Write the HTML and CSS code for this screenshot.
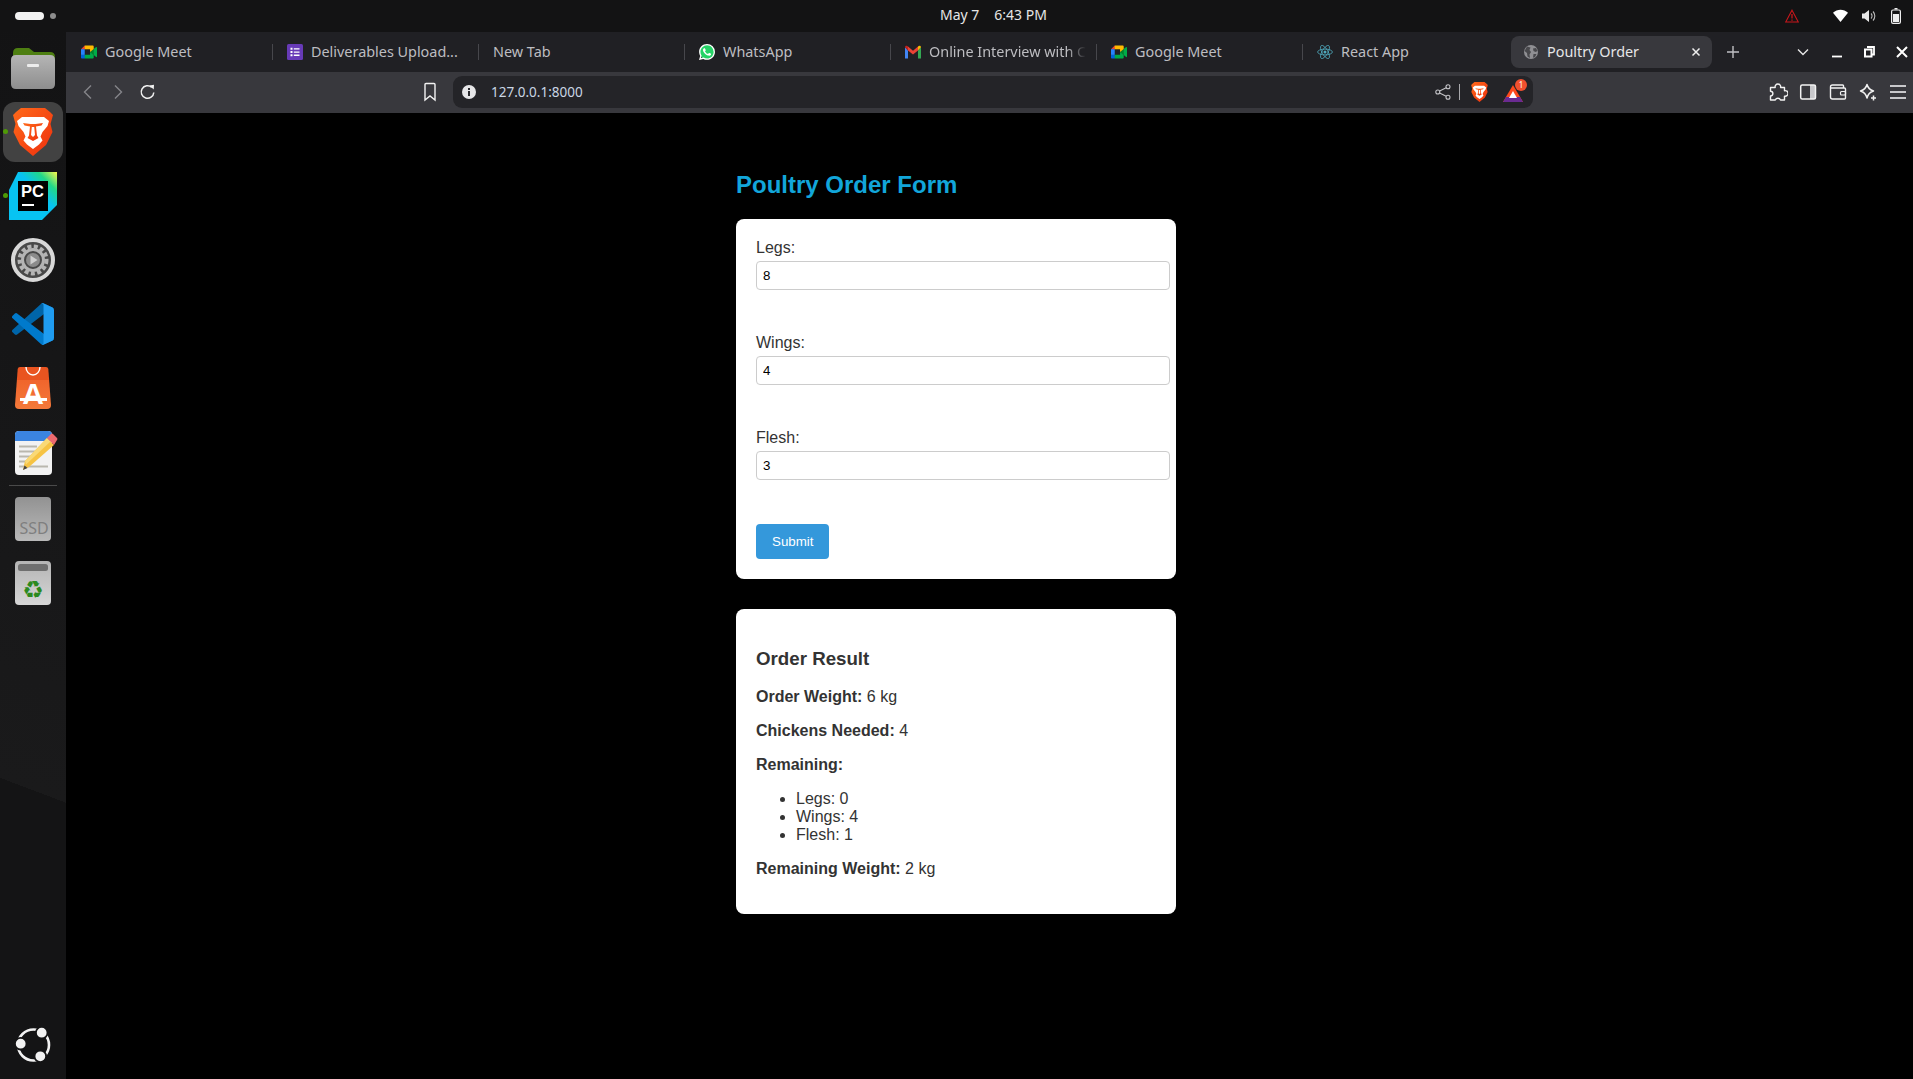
FILE: index.html
```html
<!DOCTYPE html>
<html lang="en">
<head>
<meta charset="utf-8">
<title>Poultry Order</title>
<link rel="stylesheet" href="styles.css">
</head>
<body>
<svg class="defs" aria-hidden="true">
  <defs>
    <linearGradient id="braveGrad" x1="0" y1="0" x2="1" y2="1"><stop offset="0" stop-color="#ff6a1a"/><stop offset="1" stop-color="#ee2f0e"/></linearGradient>
    <linearGradient id="pcGrad" x1="0" y1="1" x2="1" y2="0"><stop offset="0" stop-color="#07c3f2"/><stop offset=".6" stop-color="#07c3f2"/><stop offset=".8" stop-color="#21d789"/><stop offset="1" stop-color="#fcf84a"/></linearGradient>
    <linearGradient id="folderGrad" x1="0" y1="0" x2="0" y2="1"><stop offset="0" stop-color="#b5b5b5"/><stop offset="1" stop-color="#8e8e8e"/></linearGradient>
    <linearGradient id="bagGrad" x1="0" y1="0" x2="0" y2="1"><stop offset="0" stop-color="#e95420"/><stop offset=".31" stop-color="#e95420"/><stop offset=".31" stop-color="#f0652c"/><stop offset="1" stop-color="#f4793a"/></linearGradient>
    <linearGradient id="ssdGrad" x1="0" y1="0" x2="0" y2="1"><stop offset="0" stop-color="#929292"/><stop offset="1" stop-color="#b9b9b9"/></linearGradient>
    <linearGradient id="trashGrad" x1="0" y1="0" x2="0" y2="1"><stop offset="0" stop-color="#b4b4b4"/><stop offset="1" stop-color="#d6d6d6"/></linearGradient>
    <symbol id="meet" viewBox="0 0 87.5 72">
      <path fill="#00832d" d="M49.5 36l8.53 9.75 11.47 7.33 2-17.02-2-16.64-11.69 6.44z"/>
      <path fill="#0066da" d="M0 51.5V66c0 3.315 2.685 6 6 6h14.5l3-10.96-3-9.54-9.95-3z"/>
      <path fill="#e94235" d="M20.5 0L0 20.5l10.55 3 9.95-3 2.95-9.41z"/>
      <path fill="#2684fc" d="M20.5 20.5H0v31h20.5z"/>
      <path fill="#00ac47" d="M82.6 8.68L69.5 19.42v33.66l13.16 10.79c1.97 1.54 4.85.135 4.85-2.37V11c0-2.535-2.945-3.925-4.91-2.32zM49.5 36v15.5h-29V72h43c3.315 0 6-2.685 6-6V53.08z"/>
      <path fill="#ffba00" d="M63.5 0h-43v20.5h29V36l20-16.57V6c0-3.315-2.685-6-6-6z"/>
    </symbol>
    <symbol id="brave" viewBox="0 0 40 48">
      <path fill="url(#braveGrad)" d="M8 0H32L37 4 40 7 37.500 16 39.500 24 33 37 20 48 7 37 .5 24 2.500 16 0 7 3 4z"/>
      <polygon fill="#fff" points="9,9 31,9 36,13 34.500,18 29.500,24 27.500,28.500 29.500,32.500 26,36.500 20,41 14,36.500 10.500,32.500 12.500,28.500 10.500,24 5.500,18 4,13"/>
      <polygon fill="url(#braveGrad)" points="10,15 17.500,16 22.500,16 30,15 28.500,17.500 23,18.500 24,27.500 25.500,30 20,33 14.500,30 16,27.500 17,18.500 11.500,17.500"/>
      <polygon fill="#fff" points="18.800,19 21.200,19 22,27 20,29 18,27"/>
    </symbol>
  </defs>
</svg>

<header class="topbar">
  <div class="workspaces">
    <span class="workspace-pill"></span>
    <span class="workspace-dot"></span>
  </div>
  <time class="clock"><span>May 7</span><span>6:43 PM</span></time>
  <div class="tray">
    <svg class="tray-warning" viewBox="0 0 14 14"><path d="M7 1.200L13.300 13H.7z" fill="none" stroke="#c9171b" stroke-width="1.100"/><path d="M7 5v4.500M7 10.500v1.200" stroke="#c9171b" stroke-width="1.300"/></svg>
    <svg class="tray-wifi" viewBox="0 0 16 14"><path d="M0 3.500C4.500-.9 11.500-.9 16 3.500L8 13.500z" fill="#fff"/></svg>
    <svg class="tray-volume" viewBox="0 0 14 14"><path d="M0 4.500h2.500L7 1v12L2.500 9.500H0z" fill="#e8e8e8"/><path d="M9 4.500a3.500 3.500 0 0 1 0 5M11 2.500a6.500 6.500 0 0 1 0 9" fill="none" stroke="#bdbdbd" stroke-width="1.100"/></svg>
    <svg class="tray-battery" viewBox="0 0 10 16"><path d="M3.500 0h3v1.500h-3z" fill="#eee"/><rect x=".6" y="2" width="8.800" height="13.400" rx="1.400" fill="none" stroke="#eee" stroke-width="1.200"/><rect x="2" y="6" width="6" height="8" fill="#eee"/></svg>
  </div>
</header>

<div class="desktop">
  <nav class="dock">
    <div class="dock-slot">
      <svg class="ic-files" viewBox="0 0 44 41"><path d="M2 5q0-5 5-5h11l5 4h16q5 0 5 5v10H2z" fill="#4e7f12"/><path d="M0 12q0-5 5-5h34q5 0 5 5v24q0 5-5 5H5q-5 0-5-5z" fill="url(#folderGrad)"/><rect x="16" y="16" width="12" height="3" rx="1" fill="#ececec"/></svg>
    </div>
    <div class="dock-slot dock-slot-running">
      <div class="dock-tile">
        <svg class="ic-brave"><use href="#brave"/></svg>
      </div>
    </div>
    <div class="dock-slot dock-slot-running">
      <svg class="ic-pycharm" viewBox="0 0 48 48"><path d="M9 0h39v33L33 48H0V18z" fill="url(#pcGrad)"/><rect x="9" y="9" width="30" height="30"/><text x="12" y="25" class="pc-text">PC</text><rect x="13" y="32" width="12" height="2" fill="#fff"/></svg>
    </div>
    <div class="dock-slot">
      <svg class="ic-settings" viewBox="0 0 44 44"><circle cx="22" cy="22" r="20" fill="#484848" stroke="#d8d8d8" stroke-width="4"/><circle cx="22" cy="22" r="13.500" fill="none" stroke="#b4b4b4" stroke-width="4" stroke-dasharray="4 2.400"/><circle cx="22" cy="22" r="10.500" fill="none" stroke="#b4b4b4" stroke-width="3"/><circle cx="22" cy="22" r="7" fill="#8b8b8b"/><path d="M19.500 17.500l7 4.500-7 4.500z" fill="#cfcfcf"/></svg>
    </div>
    <div class="dock-slot">
      <svg class="ic-vscode" viewBox="0 0 100 100"><path fill="#0065a9" d="M96.500 10.800L75.900.9a6.200 6.200 0 0 0-7.100 1.200L1.400 63.600a4.200 4.200 0 0 0 0 6.200l5.500 5a4.200 4.200 0 0 0 5.300.2L93.400 13.300c2.700-2.100 6.600-.2 6.600 3.200v-.2a6.300 6.300 0 0 0-3.500-5.500z"/><path fill="#007acc" d="M96.500 89.200L75.900 99.100a6.200 6.200 0 0 1-7.100-1.200L1.400 36.400a4.200 4.200 0 0 1 0-6.200l5.500-5a4.200 4.200 0 0 1 5.300-.2l81.200 61.700c2.700 2.100 6.600.2 6.600-3.200v.2a6.300 6.300 0 0 1-3.500 5.500z"/><path fill="#1f9cf0" d="M75.900 99.100a6.200 6.200 0 0 1-7.100-1.200c2.300 2.300 6.200.7 6.200-2.600V4.700c0-3.300-3.900-4.900-6.200-2.600a6.200 6.200 0 0 1 7.100-1.200l20.600 9.900A6.300 6.300 0 0 1 100 16.400v67.200a6.300 6.300 0 0 1-3.500 5.600z"/></svg>
    </div>
    <div class="dock-slot">
      <svg class="ic-bag" viewBox="0 0 36 42"><path d="M5 0h26q2 0 2.300 2L36 38q0 4-4 4H4q-4 0-4-4L2.700 2Q3 0 5 0z" fill="url(#bagGrad)"/><path d="M11 0a7 8 0 0 0 14 0" fill="none" stroke="#fff" stroke-width="1.400"/><text x="18" y="37" class="bag-text">A</text><path d="M5 31h27v3H5z" fill="#fff"/></svg>
    </div>
    <div class="dock-slot">
      <svg class="ic-editor" viewBox="0 0 43 45"><rect y="1" width="37" height="44" rx="4" fill="#f2f2f2"/><path d="M0 5q0-4 4-4h29q4 0 4 4v6H0z" fill="#3b84e0"/><path d="M4 15.500h18v2H4zM4 20.500h16v2H4zM4 25.500h13v2H4zM4 30.500h9v2H4zM4 35.500h29v2H4z" fill="#b9b7ae"/><path d="M32 8l7 7-25 22-6 3 2-9z" fill="#f6c343"/><path d="M32 8l3.500 3.500L11 34.500 10 31z" fill="#f9d976"/><path d="M32 8l4-4q1-1 2 0l4 4q1 1 0 2l-3 5z" fill="#ec6a6f"/><path d="M9.500 35.500L8 40l4.500-2z" fill="#444"/></svg>
    </div>
    <div class="dock-sep"></div>
    <div class="dock-slot">
      <svg class="ic-ssd" viewBox="0 0 36 44"><rect width="36" height="44" rx="4" fill="url(#ssdGrad)"/><text x="4.500" y="37" class="ssd-text">SSD</text></svg>
    </div>
    <div class="dock-slot">
      <svg class="ic-trash" viewBox="0 0 36 44"><rect width="36" height="44" rx="4" fill="url(#trashGrad)"/><rect x="3" y="3" width="30" height="7" rx="2.500" fill="#6f6f6f"/><text x="18" y="37" class="trash-text">♻</text></svg>
    </div>
    <div class="dock-apps">
      <svg class="ic-ubuntu" viewBox="0 0 36 36"><circle cx="18.500" cy="18" r="15.500" fill="none" stroke="#f2f2f2" stroke-width="2.600"/><g fill="#f2f2f2" stroke="#141415" stroke-width="1.800"><circle cx="26.700" cy="5.700" r="5.800"/><circle cx="5.700" cy="16.700" r="5.800"/><circle cx="25.300" cy="29.300" r="5.800"/></g></svg>
    </div>
  </nav>

  <div class="browser">
    <div class="tabstrip">
      <div class="tab">
        <svg class="favicon"><use href="#meet"/></svg>
        <span class="tab-title">Google Meet</span>
      </div>
      <div class="tab">
        <svg class="favicon" viewBox="0 0 16 16"><rect width="16" height="16" rx="1.500" fill="#673ab7"/><path d="M3.500 3.800h2v2h-2zM3.500 7h2v2h-2zM3.500 10.200h2v2h-2zM6.800 4.200h5.700v1.300H6.800zM6.800 7.400h5.700v1.300H6.800zM6.800 10.600h5.700v1.300H6.800z" fill="#fff"/></svg>
        <span class="tab-title">Deliverables Upload...</span>
      </div>
      <div class="tab">
        <span class="tab-title">New Tab</span>
      </div>
      <div class="tab">
        <svg class="favicon" viewBox="0 0 24 24"><circle cx="12" cy="12" r="11" fill="#25d366"/><path fill="#fff" d="M17.472 14.382c-.297-.149-1.758-.867-2.030-.967-.273-.099-.471-.148-.67.15-.197.297-.767.966-.94 1.164-.173.199-.347.223-.644.075-.297-.15-1.255-.463-2.390-1.475-.883-.788-1.480-1.761-1.653-2.059-.173-.297-.018-.458.13-.606.134-.133.298-.347.446-.52.149-.174.198-.298.298-.497.099-.198.05-.371-.025-.52-.075-.149-.669-1.612-.916-2.207-.242-.579-.487-.5-.669-.51-.173-.008-.371-.01-.57-.01-.198 0-.52.074-.792.372-.272.297-1.040 1.016-1.040 2.479 0 1.462 1.065 2.875 1.213 3.074.149.198 2.096 3.200 5.077 4.487.709.306 1.262.489 1.694.625.712.227 1.360.195 1.871.118.571-.085 1.758-.719 2.006-1.413.248-.694.248-1.289.173-1.413-.074-.124-.272-.198-.57-.347m-5.421 7.403h-.004a9.870 9.870 0 01-5.031-1.378l-.361-.214-3.741.982.998-3.648-.235-.374a9.860 9.860 0 01-1.510-5.260c.001-5.450 4.436-9.884 9.888-9.884 2.640 0 5.122 1.030 6.988 2.898a9.825 9.825 0 012.893 6.994c-.003 5.450-4.437 9.884-9.885 9.884m8.413-18.297A11.815 11.815 0 0012.050 0C5.495 0 .16 5.335.157 11.892c0 2.096.547 4.142 1.588 5.945L.057 24l6.305-1.654a11.882 11.882 0 005.683 1.448h.005c6.554 0 11.890-5.335 11.893-11.893a11.821 11.821 0 00-3.480-8.413z"/></svg>
        <span class="tab-title">WhatsApp</span>
      </div>
      <div class="tab">
        <svg class="favicon" viewBox="0 0 16 13"><path d="M0 1.800V13h3V5z" fill="#4285f4"/><path d="M13 5v8h3V1.800z" fill="#34a853"/><path d="M3 1L8 5.200 13 1v4L8 9 3 5z" fill="#ea4335"/><path d="M0 1.800C0 .3 1.700-.4 3 1v4z" fill="#c5221f"/><path d="M16 1.800C16 .3 14.300-.4 13 1v4z" fill="#fbbc04"/></svg>
        <span class="tab-title tab-title-fade">Online Interview with C</span>
      </div>
      <div class="tab">
        <svg class="favicon"><use href="#meet"/></svg>
        <span class="tab-title">Google Meet</span>
      </div>
      <div class="tab">
        <svg class="favicon" viewBox="0 0 16 16"><g fill="none" stroke="#4fa9bd" stroke-width=".8"><ellipse cx="8" cy="8" rx="7.400" ry="2.900"/><ellipse cx="8" cy="8" rx="7.400" ry="2.900" transform="rotate(60 8 8)"/><ellipse cx="8" cy="8" rx="7.400" ry="2.900" transform="rotate(120 8 8)"/></g><circle cx="8" cy="8" r="1.500" fill="#4fa9bd"/></svg>
        <span class="tab-title">React App</span>
      </div>
      <div class="tab tab-active">
        <svg class="favicon favicon-globe" viewBox="0 0 14 14"><circle cx="7" cy="7" r="7" fill="#8f8f93"/><path d="M3 1.500l3.500 1-1 2.500L7 7 5.500 9.500 6 13 3.500 11.500 3 8 .5 6zM9 3.500l3-.5 1.500 3-2 1-2-1zM9.500 9h3L11 12l-2 .8z" fill="#48484c"/></svg>
        <span class="tab-title">Poultry Order</span>
        <svg class="tab-close" viewBox="0 0 10 10"><path d="M1.500 1.500l7 7M8.500 1.500l-7 7" stroke="#eee" stroke-width="1.500"/></svg>
      </div>
      <div class="tab-new"><svg class="ic-14" viewBox="0 0 14 14"><path d="M7 1v12M1 7h12" stroke="#bfbfc3" stroke-width="1.400"/></svg></div>
      <div class="window-controls">
        <svg class="win-icon win-chevron" viewBox="0 0 16 16"><path d="M3 5.500l5 5 5-5" fill="none" stroke="#e6e6e6" stroke-width="1.400"/></svg>
        <svg class="win-icon win-min" viewBox="0 0 16 16"><path d="M3 12.500h10" stroke="#fff" stroke-width="1.800"/></svg>
        <svg class="win-icon win-restore" viewBox="0 0 16 16"><path d="M6 3h7v7.500h-2" fill="none" stroke="#fff" stroke-width="1.800"/><rect x="4" y="5.500" width="6.500" height="7" fill="none" stroke="#fff" stroke-width="2"/></svg>
        <svg class="win-icon win-close" viewBox="0 0 16 16"><path d="M3 3l10 10M13 3L3 13" stroke="#fff" stroke-width="2"/></svg>
      </div>
    </div>

    <div class="toolbar">
      <svg class="tool-icon" viewBox="0 0 20 20"><path d="M13 3.500L6.500 10l6.500 6.500" fill="none" stroke="#85858a" stroke-width="1.400"/></svg>
      <svg class="tool-icon tool-next" viewBox="0 0 20 20"><path d="M7 3.500l6.500 6.500L7 16.500" fill="none" stroke="#85858a" stroke-width="1.400"/></svg>
      <svg class="tool-icon tool-next" viewBox="0 0 20 20"><path d="M15.800 10.500a6.300 6.300 0 1 1-2-5.100" fill="none" stroke="#f2f2f2" stroke-width="1.500"/><path d="M11.500 3.500l4.500-.8-.3 4.800z" fill="#f2f2f2"/></svg>
      <svg class="tool-icon tool-bookmark" viewBox="0 0 20 20"><path d="M5 2.500q0-1 1-1h8q1 0 1 1v15.500l-5-4-5 4z" fill="none" stroke="#f2f2f2" stroke-width="1.400"/></svg>
      <div class="urlbar">
        <svg class="url-info" viewBox="0 0 14 14"><circle cx="7" cy="7" r="7" fill="#e6e6e8"/><path d="M6 6h2v5H6zM6 3h2v2H6z" fill="#2a2a2e"/></svg>
        <span class="url-text">127.0.0.1:8000</span>
        <svg class="url-share" viewBox="0 0 16 16"><g fill="none" stroke="#c4c4c8" stroke-width="1.100"><circle cx="2.800" cy="8" r="2"/><circle cx="13" cy="2.800" r="2"/><circle cx="13" cy="13.200" r="2"/><path d="M4.600 7l6.600-3.300M4.600 9l6.600 3.300"/></g></svg>
        <span class="url-divider"></span>
        <svg class="url-brave"><use href="#brave"/></svg>
        <span class="url-bat">
          <svg class="bat-icon" viewBox="0 0 20 17"><path d="M10 0l10 17H0z" fill="#ff4a1c"/><path d="M0 17l3-5h14l3 5z" fill="#6a2b92"/><path d="M10 6l4 7H6z" fill="#fff"/></svg>
          <span class="bat-badge">1</span>
        </span>
      </div>
      <svg class="tool-icon tool-puzzle" viewBox="0 0 20 20"><path d="M2.500 5.500h4.700a2.800 2.800 0 1 1 5.400 0h3.900v3.200a2.800 2.800 0 1 1 0 5.400v3.900h-4a2.800 2.800 0 0 0-5.200 0H2.500v-4a2.400 2.400 0 0 0 0-4.800z" fill="none" stroke="#f2f2f2" stroke-width="1.400" stroke-linejoin="round"/></svg>
      <svg class="tool-icon tool-next" viewBox="0 0 20 20"><rect x="12" y="3" width="5.500" height="14" fill="#c8c8cb"/><rect x="2.700" y="3" width="14.800" height="14" rx="1.500" fill="none" stroke="#f2f2f2" stroke-width="1.500"/></svg>
      <svg class="tool-icon tool-next" viewBox="0 0 20 20"><path d="M15.500 6V3.800q0-.8-.8-.8H4.500q-2 0-2 2v10q0 2 2 2h12q1 0 1-1V7q0-1-1-1H3" fill="none" stroke="#f2f2f2" stroke-width="1.400"/><rect x="12.500" y="9.500" width="5" height="3.500" rx="1" fill="none" stroke="#f2f2f2" stroke-width="1.200"/></svg>
      <svg class="tool-icon tool-next" viewBox="0 0 20 20"><path d="M9 2.500q1.300 5 6.500 6.500-5.200 1.500-6.500 7-1.300-5.500-6.500-7Q7.700 7.500 9 2.500z" fill="none" stroke="#f2f2f2" stroke-width="1.500" stroke-linejoin="round"/><path d="M15.500 13.500v5M13 16h5" stroke="#f2f2f2" stroke-width="1.500"/></svg>
      <svg class="tool-icon tool-next" viewBox="0 0 20 20"><path d="M2 4h16M2 10h16M2 16h16" stroke="#c8c8cb" stroke-width="2"/></svg>
    </div>

    <main class="page">
      <div class="container">
        <h2 class="page-title">Poultry Order Form</h2>
        <form class="card order-form">
          <div class="field">
            <label class="field-label" for="legs">Legs:</label>
            <input class="field-input" id="legs" type="text" value="8">
          </div>
          <div class="field">
            <label class="field-label" for="wings">Wings:</label>
            <input class="field-input" id="wings" type="text" value="4">
          </div>
          <div class="field">
            <label class="field-label" for="flesh">Flesh:</label>
            <input class="field-input" id="flesh" type="text" value="3">
          </div>
          <button class="submit" type="button">Submit</button>
        </form>
        <section class="card result">
          <h3 class="result-title">Order Result</h3>
          <p><strong>Order Weight:</strong> 6 kg</p>
          <p><strong>Chickens Needed:</strong> 4</p>
          <p><strong>Remaining:</strong></p>
          <ul>
            <li>Legs: 0</li>
            <li>Wings: 4</li>
            <li>Flesh: 1</li>
          </ul>
          <p><strong>Remaining Weight:</strong> 2 kg</p>
        </section>
      </div>
    </main>
  </div>
</div>
</body>
</html>
```
FILE: styles.css
```css
* { box-sizing: border-box; }

html, body {
  margin: 0;
  height: 100%;
}

body {
  display: flex;
  flex-direction: column;
  width: 1913px;
  height: 1079px;
  overflow: hidden;
  background: #000;
  font-family: "Liberation Sans", Arial, sans-serif;
  color: #333;
}

.defs { display: block; width: 0; height: 0; }

/* top bar */
.topbar {
  display: flex;
  align-items: center;
  flex: 0 0 32px;
  background: #131314;
  font-family: "Noto Sans", sans-serif;
  font-size: 14px;
  color: #e6e6e6;
}

.workspaces {
  display: flex;
  align-items: center;
  gap: 6px;
  width: 940px;
  padding-left: 15px;
}

.workspace-pill {
  width: 29px;
  height: 8px;
  border-radius: 4px;
  background: #f2f2f2;
}

.workspace-dot {
  width: 6px;
  height: 6px;
  border-radius: 50%;
  background: #8d8d8d;
}

.clock {
  display: flex;
  gap: 15px;
  padding-bottom: 4px;
}

.tray {
  display: flex;
  align-items: center;
  margin-left: auto;
  padding-right: 12px;
}

.tray-warning { width: 14px; height: 14px; }
.tray-wifi { width: 15px; height: 14px; margin-left: 34px; }
.tray-volume { width: 14px; height: 14px; margin-left: 14px; }
.tray-battery { width: 10px; height: 16px; margin-left: 15px; }

.desktop {
  display: flex;
  flex: 1;
  min-height: 0;
}

/* dock */
.dock {
  display: flex;
  flex-direction: column;
  flex: 0 0 66px;
  padding: 4px 0 16px;
  background: linear-gradient(200.7deg, #131314 0, #1a1a1b 71.9%, #141415 71.9%);
}

.dock-slot {
  position: relative;
  display: flex;
  align-items: center;
  justify-content: center;
  flex: 0 0 64px;
}

.dock-slot-running::before {
  content: "";
  position: absolute;
  left: 3px;
  top: 29px;
  width: 5px;
  height: 5px;
  border-radius: 50%;
  background: #4e9a06;
}

.dock-tile {
  display: flex;
  align-items: center;
  justify-content: center;
  width: 60px;
  height: 60px;
  border-radius: 12px;
  background: #424242;
}

.dock-sep {
  flex: 0 0 1px;
  margin: 1px 9px 1px;
  background: #4a4a4a;
}

.dock-apps {
  display: flex;
  justify-content: center;
  margin-top: auto;
}

.ic-files { width: 44px; height: 41px; }
.ic-brave { width: 40px; height: 48px; }
.ic-pycharm { width: 48px; height: 48px; }
.ic-settings { width: 44px; height: 44px; }
.ic-vscode { width: 42px; height: 42px; }
.ic-bag { width: 36px; height: 42px; }
.ic-editor { width: 43px; height: 45px; margin-left: 7px; }
.ic-ssd { width: 36px; height: 44px; }
.ic-trash { width: 36px; height: 44px; }
.ic-ubuntu { width: 36px; height: 36px; }

.pc-text {
  font-family: "Liberation Sans", sans-serif;
  font-weight: 700;
  font-size: 16.5px;
  fill: #fff;
}

.bag-text {
  font-family: "Liberation Sans", sans-serif;
  font-weight: 700;
  font-size: 30px;
  text-anchor: middle;
  fill: #fff;
}

.ssd-text {
  font-family: "Noto Sans", sans-serif;
  font-size: 16px;
  fill: #7f7f7f;
}

.trash-text {
  font-family: "DejaVu Sans", sans-serif;
  font-size: 24px;
  text-anchor: middle;
  fill: #2b8a1e;
}

/* browser */
.browser {
  display: flex;
  flex-direction: column;
  flex: 1;
  min-width: 0;
}

.tabstrip {
  display: flex;
  align-items: center;
  flex: 0 0 40px;
  padding-left: 1px;
  background: #202024;
  font-family: "Noto Sans", sans-serif;
  font-size: 14.4px;
  color: #bdbdc1;
}

.tab {
  display: flex;
  align-items: center;
  flex: 0 0 206px;
  gap: 8px;
  height: 32px;
  padding-left: 14px;
  position: relative;
}

.tab::after {
  content: "";
  position: absolute;
  right: 0;
  top: 8px;
  width: 1px;
  height: 16px;
  background: #47474c;
}

.tab-active {
  flex-basis: 201px;
  margin-left: 2px;
  padding-left: 13px;
  border-radius: 8px;
  background: #38383d;
  color: #e6e6e8;
}

.tab-active::after,
.tab:nth-last-child(4)::after { content: none; }

.favicon { flex: 0 0 16px; width: 16px; height: 16px; }
.favicon-globe { flex-basis: 14px; width: 14px; height: 14px; margin-right: 1px; }

.tab-title { white-space: nowrap; padding-bottom: 2px; }

.tab-title-fade {
  -webkit-mask-image: linear-gradient(90deg, #000 88%, transparent);
  mask-image: linear-gradient(90deg, #000 88%, transparent);
}

.tab-close {
  width: 10px;
  height: 10px;
  margin-left: auto;
  margin-right: 11px;
}

.tab-new {
  display: flex;
  justify-content: center;
  flex: 0 0 42px;
}

.ic-14 { width: 14px; height: 14px; }

.window-controls {
  display: flex;
  align-items: center;
  margin-left: auto;
  padding-right: 3px;
}

.win-icon { width: 16px; height: 16px; }
.win-min { margin-left: 18px; }
.win-restore { margin-left: 16px; }
.win-close { margin-left: 17px; }

.toolbar {
  display: flex;
  align-items: center;
  flex: 0 0 41px;
  padding-left: 12px;
  padding-bottom: 1px;
  background: #38383d;
}

.tool-icon { flex: 0 0 20px; width: 20px; height: 20px; }
.tool-next { margin-left: 10px; }
.tool-bookmark { margin-left: 262px; }
.tool-puzzle { margin-left: 235px; }

.urlbar {
  display: flex;
  align-items: center;
  flex: 0 0 1080px;
  height: 32px;
  margin-left: 13px;
  padding: 0 10px 0 9px;
  border-radius: 9px;
  background: #242428;
}

.url-info { width: 14px; height: 14px; }

.url-text {
  margin-left: 15px;
  font-family: "Noto Sans", sans-serif;
  font-size: 13.5px;
  padding-bottom: 1px;
  color: #c9d6e4;
}

.url-share { width: 16px; height: 16px; margin-left: auto; }

.url-divider {
  width: 1px;
  height: 16px;
  margin-left: 8px;
  background: #a8a8ac;
}

.url-brave { width: 17px; height: 20px; margin-left: 11px; }

.url-bat {
  position: relative;
  display: flex;
  margin-left: 15px;
}

.bat-icon { width: 20px; height: 17px; margin-top: 2px; }

.bat-badge {
  position: absolute;
  right: -4px;
  top: -4px;
  width: 12px;
  height: 12px;
  border-radius: 50%;
  background: #f1502f;
  font-family: "Noto Sans", sans-serif;
  font-size: 8px;
  line-height: 12px;
  text-align: center;
  color: #fff;
}

/* page */
.page {
  flex: 1;
  padding: 38.4px 0 0 670px;
  background: #000;
}

.container { width: 440px; }

.page-title {
  margin: 19.92px 0;
  font-size: 24px;
  color: #12a6da;
}

.card {
  padding: 20px;
  border-radius: 8px;
  background: #fff;
}

.result { margin-top: 30px; }

.result-title { margin: 19.6px 0 17.84px; }

.field { margin-bottom: 43.8px; }

.field-label {
  display: block;
  margin-bottom: 4px;
}

.field-input {
  display: block;
  width: 414px;
  height: 29px;
  padding: 6px;
  border: 1px solid #ccc;
  border-radius: 4px;
  font-family: "Liberation Sans", Arial, sans-serif;
  font-size: 13.33px;
  color: #000;
  background: #fff;
}

.submit {
  display: block;
  padding: 10px 16px;
  border: 0;
  border-radius: 4px;
  background: #3498db;
  font-family: "Liberation Sans", Arial, sans-serif;
  font-size: 13.33px;
  color: #fff;
}
```
